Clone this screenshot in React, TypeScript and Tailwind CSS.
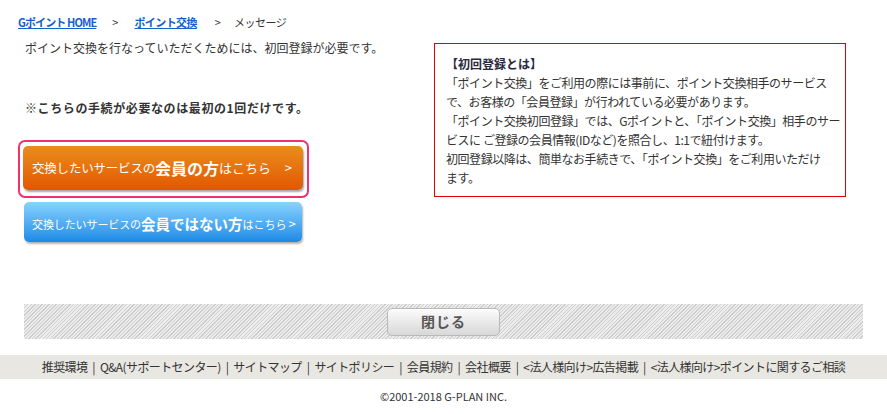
import React from "react";

const font = "font-['Noto_Sans_CJK_JP','Liberation_Sans',sans-serif]";

const footerLinks = [
  "推奨環境",
  "Q&A(サポートセンター)",
  "サイトマップ",
  "サイトポリシー",
  "会員規約",
  "会社概要",
  "<法人様向け>広告掲載",
  "<法人様向け>ポイントに関するご相談",
];

const infoLines = [
  "「ポイント交換」をご利用の際には事前に、ポイント交換相手のサービス",
  "で、お客様の「会員登録」が行われている必要があります。",
  "「ポイント交換初回登録」では、Gポイントと、「ポイント交換」相手のサー",
  "ビスに ご登録の会員情報(IDなど)を照合し、1:1で紐付けます。",
  "初回登録以降は、簡単なお手続きで、「ポイント交換」をご利用いただけ",
  "ます。",
];

export default function App() {
  return (
    <div className={`${font} w-[887px] h-[414px] bg-white text-[#333] overflow-hidden`}>
      <div className="px-[24px]">
        {/* breadcrumb */}
        <div className="-ml-[6px] pt-[15px] h-[39px] flex items-start text-[11px] leading-[14px]">
          <a className="font-bold text-[#1660c9] underline tracking-[-0.9px]">Gポイント HOME</a>
          <span className="ml-[16px] mr-[16px]">&gt;</span>
          <a className="font-bold text-[#1660c9] underline tracking-[-0.6px]">ポイント交換</a>
          <span className="ml-[18px] mr-[13px]">&gt;</span>
          <span className="tracking-[-0.5px]">メッセージ</span>
        </div>

        <div className="flex">
          {/* left column */}
          <div className="w-[410px]">
            <p className="ml-[1px] text-[12px] leading-[18px] whitespace-nowrap">
              ポイント交換を行なっていただくためには、初回登録が必要です。
            </p>
            <p className="ml-[1px] mt-[42px] text-[12px] leading-[18px] font-bold tracking-[0.6px] whitespace-nowrap">
              ※こちらの手続が必要なのは最初の1回だけです。
            </p>

            <div className="mt-[23px] -ml-[6px] w-[291px] h-[58px] border-2 border-[#f3306c] rounded-[7px] pl-[3px] pt-[4px]">
              <div className="w-[280px] h-[44px] rounded-[5px] bg-gradient-to-b from-[#e98d1c] to-[#e25600] shadow-[1px_2px_2px_rgba(0,0,0,0.35)] flex items-center pl-[9px] pr-[11px] text-white">
                <span className="text-[12.5px] tracking-[-0.2px]">交換したいサービスの</span>
                <span className="text-[16px] font-bold">会員の方</span>
                <span className="text-[13px]">はこちら</span>
                <span className="ml-auto text-[13px]">&gt;</span>
              </div>
            </div>

            <div className="mt-[4px] w-[278px] h-[40px] rounded-[5px] bg-gradient-to-b from-[#86d3ff] to-[#168ae6] shadow-[1px_2px_2px_rgba(0,0,0,0.3)] flex items-center pt-[4px] pl-[8px] text-white">
              <span className="text-[11px] tracking-[-0.1px]">交換したいサービスの</span>
              <span className="text-[14.5px] font-bold">会員ではない方</span>
              <span className="text-[11px]">はこちら</span>
              <span className="ml-[2px] text-[13px]">&gt;</span>
            </div>
          </div>

          {/* info box */}
          <div className="mt-[4px] w-[412px] h-[154px] border border-[#e00000] pl-[11px] pt-[10px] text-[12px] leading-[19px]">
            <div className="font-bold text-[#2a2a40]">【初回登録とは】</div>
            {infoLines.map((l) => (
              <div key={l} className="whitespace-nowrap tracking-[-0.45px]">
                {l}
              </div>
            ))}
          </div>
        </div>

        {/* close bar */}
        <div className="mt-[62px] h-[35px] bg-[repeating-linear-gradient(135deg,#cdcdcd_0px,#cdcdcd_1px,#ededed_1px,#ededed_2.5px)] flex items-center justify-center">
          <button className="w-[113px] h-[28px] rounded-[5px] border border-[#b9b9b9] bg-gradient-to-b from-[#fdfdfd] via-[#e9e9e9] to-[#d8d8d8] shadow-[inset_0_1px_0_#fff] text-[14px] font-bold text-[#555] tracking-[1px]">
            閉じる
          </button>
        </div>
      </div>

      {/* footer */}
      <div className="mt-[16px] h-[24px] bg-[#e8e7e2] flex items-center justify-center text-[12px] tracking-[-0.6px] whitespace-nowrap">
        {footerLinks.map((l, i) => (
          <React.Fragment key={l}>
            {i > 0 && <span className="mx-[5px]">|</span>}
            <a>{l}</a>
          </React.Fragment>
        ))}
      </div>
      <div className="mt-[10px] text-center text-[11px] leading-[14px]">
        ©2001-2018 G-PLAN INC.
      </div>
    </div>
  );
}
